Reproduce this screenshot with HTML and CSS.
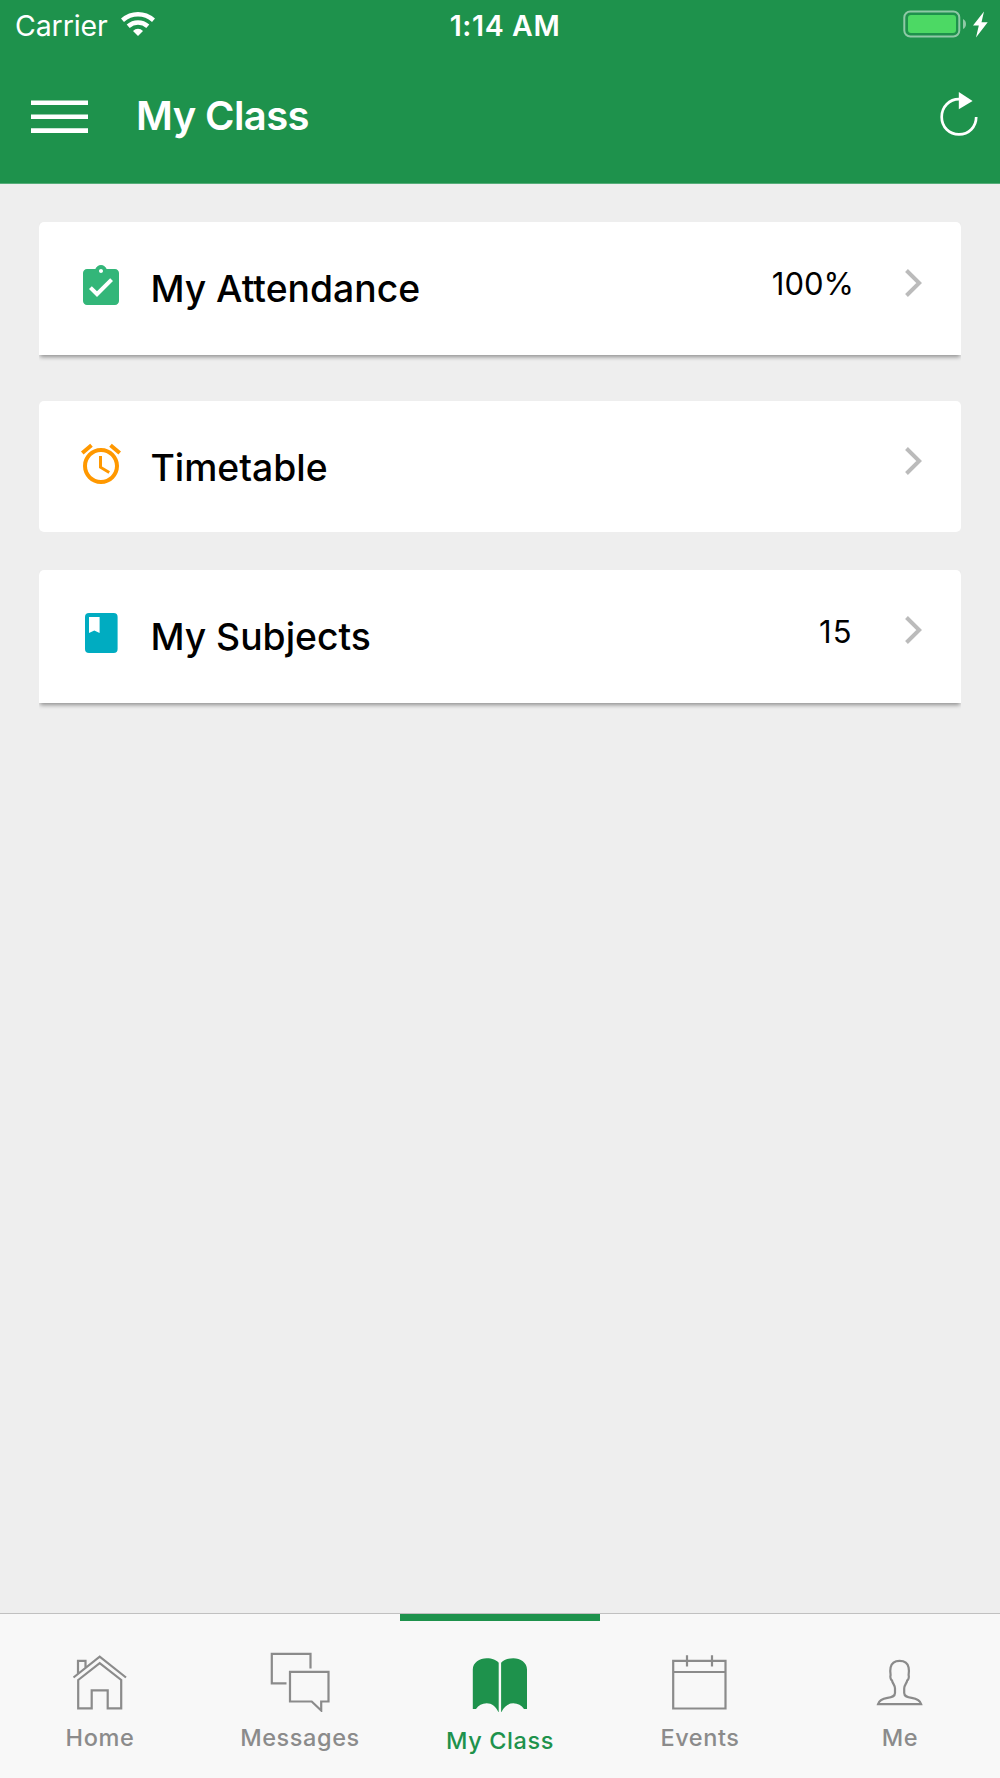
FILE: index.html
```html
<!DOCTYPE html>
<html lang="en">
<head>
<meta charset="utf-8">
<meta name="viewport" content="width=device-width">
<title>My Class</title>
<link rel="stylesheet" href="styles.css">
</head>
<body>
<div class="screen">
  <header class="header">
    <div class="status">
      <div class="status-left">
        <span class="carrier">Carrier</span>
        <svg class="wifi" viewBox="0 0 34 24" width="34" height="24" fill="none" stroke="#fff">
          <path d="M1.500 8.200Q8.500 2.300 17 2.300T32.500 8.200" stroke-width="4.600"/>
          <path d="M7.200 14.200Q11.500 10.500 17 10.500T26.800 14.200" stroke-width="4.600"/>
          <path d="M12 19Q14.200 16.700 17 16.700T22 19L17 24Z" fill="#fff" stroke="none"/>
        </svg>
      </div>
      <span class="time">1:14 AM</span>
      <svg class="battery" viewBox="0 0 86 28" width="86" height="28">
        <rect x="1.300" y="1.500" width="55" height="25" rx="6" fill="none" stroke="#fff" stroke-opacity=".5" stroke-width="2"/>
        <rect x="5" y="5" width="48" height="18" rx="3" fill="#4cd964"/>
        <path d="M60 9q3 1.500 3 5t-3 5z" fill="#fff" fill-opacity=".5"/>
        <path d="M81 1.500L70 15.500h5.800L73 27.500 84.700 12.200h-6.200z" fill="#fff"/>
      </svg>
    </div>
    <div class="navbar">
      <svg class="menu" viewBox="0 0 57 33" width="57" height="33" fill="#fff">
        <path d="M0 .4h57v4.700H0zM0 14.400h57v4.700H0zM0 28.300h57v4.700H0z"/>
      </svg>
      <h1 class="title">My Class</h1>
      <svg class="refresh" viewBox="0 0 38 44" width="38" height="44">
        <path d="M19 7.200C9.300 7.200 1.700 14.800 1.700 25S9.300 42.400 19 42.400 36.200 35 36.200 25" fill="none" stroke="#fff" stroke-width="2.700"/>
        <path d="M18.800 0v17.200L32.600 9z" fill="#fff"/>
      </svg>
    </div>
  </header>

  <main class="cards">
    <a class="card raised">
      <svg class="icon" viewBox="0 0 24 24" fill="#33b679"><path d="M19 3h-4.180C14.400 1.840 13.300 1 12 1s-2.400.84-2.820 2H5c-1.100 0-2 .9-2 2v14c0 1.100.9 2 2 2h14c1.100 0 2-.9 2-2V5c0-1.100-.9-2-2-2zm-7 0c.55 0 1 .45 1 1s-.45 1-1 1-1-.45-1-1 .45-1 1-1zm-2 14l-4-4 1.410-1.410L10 14.170l6.590-6.590L18 9l-8 8z"/></svg>
      <span class="label">My Attendance</span>
      <span class="value">100%</span>
      <svg class="chevron" viewBox="0 0 17 28"><path d="M1.500 1.500L14.200 14 1.500 26.500"/></svg>
    </a>
    <a class="card timetable">
      <svg class="icon" viewBox="0 0 24 24" fill="#ff9800"><path d="M22 5.720l-4.600-3.860-1.290 1.530 4.600 3.860L22 5.720zM7.880 3.390L6.600 1.860 2 5.710l1.290 1.530 4.590-3.850zM12.500 8H11v6l4.750 2.850.75-1.230-4-2.370V8zM12 4c-4.970 0-9 4.030-9 9s4.020 9 9 9c4.970 0 9-4.030 9-9s-4.030-9-9-9zm0 16c-3.870 0-7-3.130-7-7s3.130-7 7-7 7 3.130 7 7-3.130 7-7 7z"/></svg>
      <span class="label">Timetable</span>
      <svg class="chevron" viewBox="0 0 17 28"><path d="M1.500 1.500L14.200 14 1.500 26.500"/></svg>
    </a>
    <a class="card raised subjects">
      <svg class="icon" viewBox="0 0 24 24"><rect x="4" y="2" width="16.300" height="20" rx="2" fill="#00acc1"/><path d="M6 4h5.300v8L8.650 10.700 6 12z" fill="#fff"/></svg>
      <span class="label">My Subjects</span>
      <span class="value count">15</span>
      <svg class="chevron" viewBox="0 0 17 28"><path d="M1.500 1.500L14.200 14 1.500 26.500"/></svg>
    </a>
  </main>

  <nav class="tabs">
    <a class="tab">
      <svg class="tab-icon" viewBox="0 0 60 60">
        <path d="M3.500 25.500L29.700 4.700 56 25.500M8 21.500V8.800h7.500v6.700"/>
        <path d="M8.200 28L29.700 11.200 51.200 28v28.300H37.700v-18H21.700v18H8.200z"/>
      </svg>
      <span class="tab-label">Home</span>
    </a>
    <a class="tab">
      <svg class="tab-icon" viewBox="0 0 60 60">
        <path d="M16.500 31.300H1.800V1.800h38.700v14.700M20 19.800h38.500v29.700h-7.300v9l-9.500-9H20z"/>
      </svg>
      <span class="tab-label">Messages</span>
    </a>
    <a class="tab active">
      <svg class="tab-icon" viewBox="0 0 60 60">
        <path d="M2.800 57V17.500C2.800 10.500 9.500 6.200 16.700 6.200c5.500 0 10 1.800 12 4.500v50C26 54.700 22 51.300 16.700 51.300 12 51.300 8.500 53.500 6 57zM57 57V17.500c0-7-6.500-11.300-13.700-11.300-5.500 0-10 1.800-12.200 4.500v50C34 54.700 38 51.300 43.300 51.300c4.700 0 8.200 2.200 10.700 5.700z"/>
      </svg>
      <span class="tab-label">My Class</span>
    </a>
    <a class="tab">
      <svg class="tab-icon" viewBox="0 0 60 60">
        <path d="M3.200 8.800h52.300v47.700H3.200zM3.200 20h52.300M17 3.300v11.200M42 3.300v11.200"/>
      </svg>
      <span class="tab-label">Events</span>
    </a>
    <a class="tab">
      <svg class="tab-icon" viewBox="0 0 60 60">
        <path d="M8 52.200C9 48.500 13 46.500 17.500 45.800C22 45.200 25 44.500 25 41V36.500C25 33 22.500 31.500 22 28.500C20.500 27.500 20 24.500 20.600 23C20 19.500 20.200 17.500 20.600 15.500C21.500 11 25 8.800 29.600 8.800S37.800 11 38.600 15.500C39 17.500 39.200 19.500 38.600 23C39.200 24.500 38.700 27.500 37.200 28.500C36.700 31.500 34.200 33 34.200 36.500V41C34.200 44.500 37.200 45.200 41.700 45.800C46.200 46.500 50.200 48.500 51.200 52.200Z"/>
      </svg>
      <span class="tab-label">Me</span>
    </a>
  </nav>
</div>
</body>
</html>
```
FILE: styles.css
```css
* {
  box-sizing: border-box;
}

body {
  margin: 0;
  font-family: Inter, "Liberation Sans", sans-serif;
  color: #000;
}

.screen {
  display: flex;
  flex-direction: column;
  width: 1000px;
  height: 1778px;
  background: #eee;
}

svg {
  display: block;
  flex: none;
}

/* Header */
.header {
  height: 184px;
  background: #1e924c;
  border-bottom: 1px solid #56ad79;
  color: #fff;
}

.status {
  display: grid;
  grid-template-columns: 1fr auto 1fr;
  align-items: start;
  height: 52px;
  padding: 8px 11px 0 15px;
}

.status-left {
  display: flex;
}

.carrier {
  width: 106px;
  font-size: 28.500px;
  line-height: 35px;
  letter-spacing: -.1px;
}

.wifi {
  margin-top: 4px;
}

.time {
  padding-left: 6px;
  font-size: 28.500px;
  font-weight: 600;
  line-height: 35px;
  letter-spacing: .6px;
}

.battery {
  justify-self: end;
  margin-top: 2px;
}

.navbar {
  display: flex;
  align-items: flex-start;
  padding: 40px 22px 0 31px;
}

.menu {
  margin-top: 8px;
}

.title {
  flex: 1;
  margin: 0 0 0 48px;
  font-size: 40px;
  font-weight: 600;
  line-height: 47px;
  letter-spacing: -.600px;
}

/* Cards */
.cards {
  flex: 1;
  display: flex;
  flex-direction: column;
  padding: 38px 39px;
}

.card {
  display: flex;
  align-items: flex-start;
  height: 133px;
  padding: 41px 39px 0 38.400px;
  background: #fff;
  border-radius: 5px;
}

/* The shadow falls only below the card, never past its sides */
.raised {
  border-radius: 5px 5px 0 0;
  box-shadow: 0 3px 4px -1px rgba(0, 0, 0, .4);
  clip-path: inset(0 0 -10px);
}

.timetable {
  height: 131px;
  margin: 46px 0 38px;
  padding-top: 39px;
}

.subjects {
  padding-top: 39px;
}

.icon {
  width: 48px;
  height: 48px;
}

.label {
  flex: 1;
  margin: 3px 0 0 25px;
  font-size: 37.300px;
  font-weight: 500;
  line-height: 46px;
}

.timetable .label,
.subjects .label {
  margin-top: 4.500px;
}

.value {
  margin-right: 51px;
  font-size: 31px;
  line-height: 42px;
}

.count {
  margin: 2px 52.500px 0 0;
  letter-spacing: 1px;
}

.chevron {
  width: 17px;
  height: 28px;
  margin-top: 5.500px;
  fill: none;
  stroke: #bbb;
  stroke-width: 4;
}

.timetable .chevron,
.subjects .chevron {
  margin-top: 7px;
}

/* Tab bar */
.tabs {
  display: grid;
  grid-template-columns: repeat(5, 1fr);
  height: 165px;
  border-top: 1px solid #c0c0c0;
  background: #f8f8f8;
  color: #8b8b8b;
}

.tab {
  display: flex;
  flex-direction: column;
  align-items: center;
  padding-top: 38px;
}

.tab-icon {
  width: 60px;
  height: 60px;
  fill: none;
  stroke: currentColor;
  stroke-width: 2.200;
}

.tab-label {
  margin-top: 11px;
  font-size: 23.500px;
  font-weight: 500;
  line-height: 30px;
  letter-spacing: .600px;
}

.active {
  border-top: 7px solid #1e924c;
  padding-top: 31px;
  color: #1e924c;
}

.active .tab-icon {
  fill: currentColor;
  stroke: none;
}

.active .tab-label {
  margin-top: 14px;
}
```
